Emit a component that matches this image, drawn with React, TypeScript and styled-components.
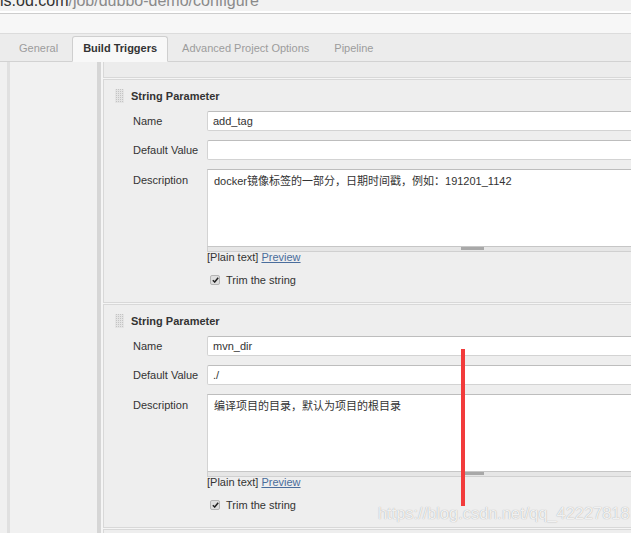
import styled, { createGlobalStyle } from "styled-components";

const GlobalStyle = createGlobalStyle`
    html, body {
        margin: 0;
        padding: 0;
        background: #f0f0f0;
        overflow: hidden;
    }
    body {
        font-family: "Liberation Sans", Arial, "Noto Sans CJK SC", sans-serif;
        font-size: 11px;
        color: #333;
    }
`;

const Page = styled.div`
    position: relative;
    width: 631px;
    height: 533px;
    overflow: hidden;
`;

const UrlBar = styled.div`
    height: 11px;
    overflow: hidden;
    background: #f2f2f2;
    border-bottom: 2px solid #fff;
`;

const UrlText = styled.div`
    margin-top: -8px;
    font-size: 16px;
    line-height: 18px;
    color: #8a8a8a;
    white-space: nowrap;

    b {
        font-weight: normal;
        color: #333;
    }
`;

const Toolbar = styled.div`
    height: 19px;
    background: #f7f7f7;
    border-top: 1px solid #cdcdcd;
    border-bottom: 1px solid #dcdcdc;
`;

const TabBar = styled.div`
    display: flex;
    align-items: flex-end;
    height: 27px;
    padding-left: 8px;
    background: #ececec;
    border-bottom: 1px solid #d2d2d2;
`;

const Tab = styled.div<{ active?: boolean }>`
    height: 26px;
    line-height: 23px;
    padding: 0 10px;
    margin-right: 3px;
    margin-bottom: -1px;
    box-sizing: border-box;
    white-space: nowrap;
    color: ${(p) => (p.active ? "#333" : "#9c9c9c")};
    font-weight: ${(p) => (p.active ? "bold" : "normal")};
    background: ${(p) => (p.active ? "#f8f8f8" : "transparent")};
    border: 1px solid ${(p) => (p.active ? "#cfcfcf" : "transparent")};
    border-bottom-color: ${(p) => (p.active ? "#f8f8f8" : "transparent")};
    border-radius: 3px 3px 0 0;
`;

const Main = styled.div`
    display: flex;
    height: 480px;
`;

const Sidebar = styled.div`
    width: 87px;
    flex: none;
    margin-left: 7px;
    background: #f1f1f1;
    border-left: 3px solid #e0e0e0;
    border-right: 4px solid #d6d6d6;
`;

const Content = styled.div`
    flex: 1;
    padding-left: 2px;
    background: #f5f5f5;
    display: flex;
    flex-direction: column;
    gap: 1px;
`;

const Stub = styled.div`
    flex: none;
    height: 15px;
    width: 700px;
    background: #ececec;
    border: 1px solid #d8d8d8;
    border-top: none;
`;

const Section = styled.div`
    flex: none;
    width: 700px;
    height: 213px;
    box-sizing: content-box;
    padding: 9px 0 0 11px;
    background: #eeeeee;
    border: 1px solid #d8d8d8;
`;

const Header = styled.div`
    display: flex;
    align-items: center;
    gap: 7px;
    height: 14px;
    font-weight: bold;
`;

const Form = styled.div`
    display: grid;
    grid-template-columns: 74px 530px;
    row-gap: 9px;
    margin: 8px 0 0 18px;
`;

const Label = styled.div<{ top?: boolean }>`
    display: flex;
    align-items: ${(p) => (p.top ? "flex-start" : "center")};
    padding-top: ${(p) => (p.top ? "5px" : "0")};
    white-space: nowrap;
`;

const Input = styled.div`
    height: 20px;
    box-sizing: border-box;
    padding: 0 5px;
    line-height: 19px;
    background: #fff;
    border: 1px solid #d3d3d3;
    border-top-color: #bdbdbd;
    border-radius: 2px;
`;

const TextArea = styled.div`
    display: flex;
    flex-direction: column;
`;

const TextBox = styled.div`
    height: 77px;
    box-sizing: border-box;
    padding: 5px 6px;
    line-height: 13px;
    background: #fff;
    border: 1px solid #d3d3d3;
    border-top-color: #bdbdbd;
    border-bottom: none;
`;

const Grippie = styled.div`
    height: 4px;
    background: #e6e6e6;
    border: 1px solid #d0d0d0;
    border-top-color: #c6c6c6;
    display: flex;
    justify-content: center;

    &::after {
        content: "";
        width: 23px;
        height: 3px;
        background: #a8a8a8;
    }
`;

const Field = styled.div`
    grid-column: 2;
`;

const Hint = styled.div`
    margin-top: -10px;
    line-height: 12px;

    a {
        color: #4a6d9c;
        text-decoration: underline;
    }
`;

const CheckRow = styled.div`
    display: flex;
    align-items: center;
    gap: 6px;
    margin: 1px 0 0 3px;
    height: 14px;
`;

const Check = styled.span`
    display: inline-flex;
    align-items: center;
    justify-content: center;
    width: 10px;
    height: 10px;
    box-sizing: border-box;
    background: #dedede;
    border: 1px solid #b4b4b4;
    border-radius: 2px;
`;

const Marker = styled.div`
    position: absolute;
    left: 461px;
    top: 349px;
    width: 4px;
    height: 157px;
    background: #f23b3b;
`;

const Watermark = styled.div`
    position: absolute;
    left: 378px;
    top: 503px;
    font-size: 16.4px;
    line-height: 20px;
    color: rgba(255, 255, 255, 0.85);
    text-shadow: 0 0 1px rgba(0, 0, 0, 0.35);
    white-space: nowrap;
`;

function Grip() {
    const dots = [];
    for (let col = 0; col < 4; col++) {
        for (let row = 0; row < 7; row++) {
            dots.push(
                <rect key={`${col}-${row}`} x={col * 2 + 1} y={row * 2} width="1" height="1" fill="#c4c4c4" />
            );
        }
    }
    return (
        <svg width="9" height="14" viewBox="0 0 9 14">
            <rect x="0" y="0" width="9" height="14" fill="#e4e4e4" />
            {dots}
        </svg>
    );
}

function CheckMark() {
    return (
        <svg width="7" height="6" viewBox="0 0 7 6">
            <path d="M0.8 3.2 L2.7 5 L6.2 0.8" stroke="#222" strokeWidth="1.5" fill="none" />
        </svg>
    );
}

type Param = {
    name: string;
    value: string;
    description: string;
};

const params: Param[] = [
    { name: "add_tag", value: "", description: "docker镜像标签的一部分，日期时间戳，例如：191201_1142" },
    { name: "mvn_dir", value: "./", description: "编译项目的目录，默认为项目的根目录" },
];

function StringParameter({ name, value, description }: Param) {
    return (
        <Section>
            <Header>
                <Grip />
                <span>String Parameter</span>
            </Header>
            <Form>
                <Label>Name</Label>
                <Input>{name}</Input>
                <Label>Default Value</Label>
                <Input>{value}</Input>
                <Label top>Description</Label>
                <TextArea>
                    <TextBox>{description}</TextBox>
                    <Grippie />
                </TextArea>
                <Field>
                    <Hint>
                        [Plain text] <a>Preview</a>
                    </Hint>
                </Field>
                <Field>
                    <CheckRow>
                        <Check>
                            <CheckMark />
                        </Check>
                        Trim the string
                    </CheckRow>
                </Field>
            </Form>
        </Section>
    );
}

export default function App() {
    return (
        <Page>
            <GlobalStyle />
            <UrlBar>
                <UrlText>
                    <b>is.od.com</b>/job/dubbo-demo/configure
                </UrlText>
            </UrlBar>
            <Toolbar />
            <TabBar>
                <Tab>General</Tab>
                <Tab active>Build Triggers</Tab>
                <Tab>Advanced Project Options</Tab>
                <Tab>Pipeline</Tab>
            </TabBar>
            <Main>
                <Sidebar />
                <Content>
                    <Stub />
                    {params.map((p) => (
                        <StringParameter key={p.name} {...p} />
                    ))}
                    <Section />
                </Content>
            </Main>
            <Marker />
            <Watermark>https://blog.csdn.net/qq_42227818</Watermark>
        </Page>
    );
}
